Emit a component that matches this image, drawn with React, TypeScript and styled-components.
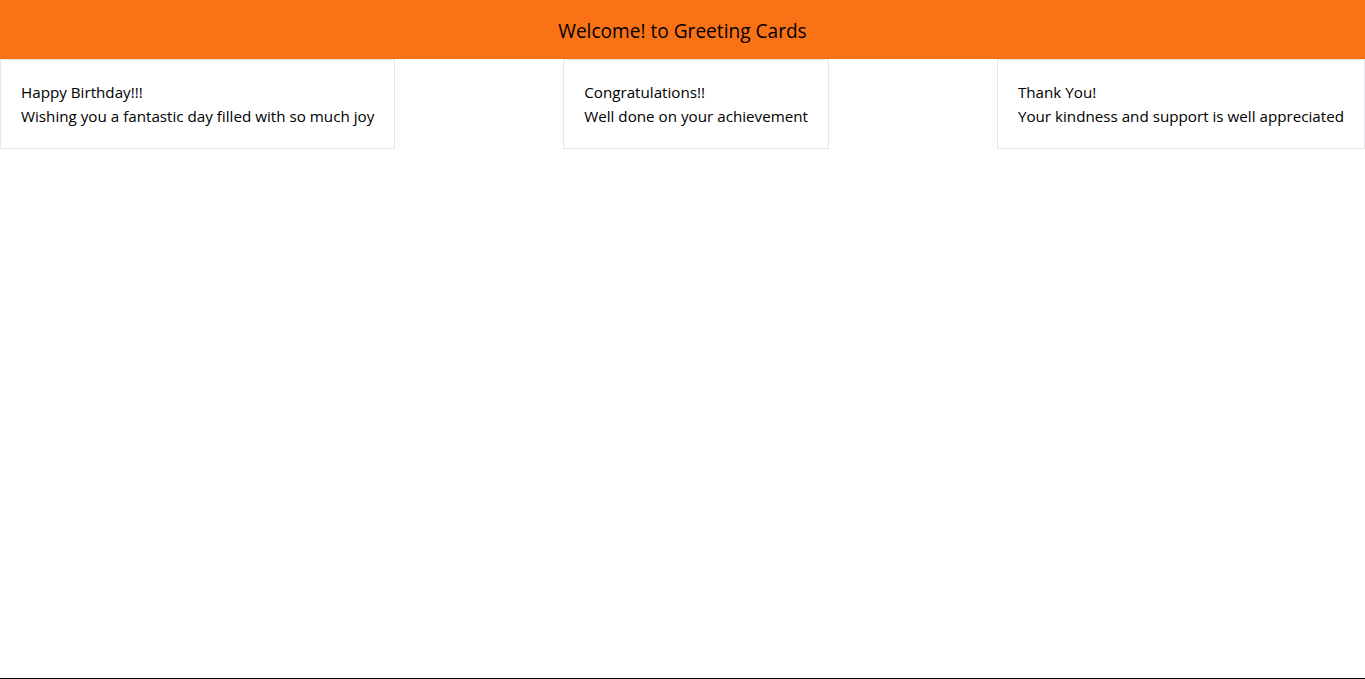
import React from "react";
import styled, { createGlobalStyle } from "styled-components";

const Global = createGlobalStyle`
  * { box-sizing: border-box; }
  body {
    margin: 0;
    font-family: "Open Sans", "Noto Sans", sans-serif;
    color: #000;
    background: #fff;
  }
`;

const Page = styled.div`
  min-height: 100vh;
  display: flex;
  flex-direction: column;
  border-bottom: 1px solid #000;
`;

const Header = styled.header`
  height: 59px;
  background: #f97316;
  display: flex;
  align-items: center;
  justify-content: center;
  font-size: 19.1px;
  padding-top: 2px;
  color: #000;
`;

const Row = styled.main`
  display: flex;
  justify-content: space-between;
  align-items: flex-start;
`;

const Card = styled.div`
  border: 1px solid #e5e7eb;
  padding: 20px;
  font-size: 15.2px;
  line-height: 24px;
  color: #000;
`;

const Line = styled.p`
  margin: 0;
  white-space: nowrap;
`;

const cards = [
  { title: "Happy Birthday!!!", text: "Wishing you a fantastic day filled with so much joy" },
  { title: "Congratulations!!", text: "Well done on your achievement" },
  { title: "Thank You!", text: "Your kindness and support is well appreciated" },
];

export default function App() {
  return (
    <>
      <Global />
      <Page>
        <Header>Welcome! to Greeting Cards</Header>
        <Row>
          {cards.map((c) => (
            <Card key={c.title}>
              <Line>{c.title}</Line>
              <Line>{c.text}</Line>
            </Card>
          ))}
        </Row>
      </Page>
    </>
  );
}
